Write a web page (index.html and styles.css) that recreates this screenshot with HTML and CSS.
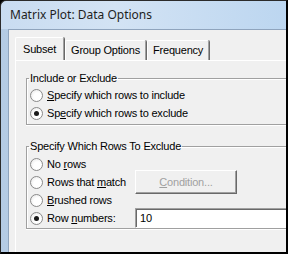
FILE: index.html
```html
<!DOCTYPE html>
<html lang="en">
<head>
  <meta charset="UTF-8" />
  <title>Matrix Plot: Data Options</title>
  <link rel="stylesheet" href="styles.css">
</head>
<body>
  <div class="window">
    <div class="titlebar">Matrix Plot: Data Options</div>

    <div class="frame">
      <div class="client">
        <!-- TABS -->
        <div class="tabs">
          <div class="tab active">Subset</div>
          <div class="tab">Group Options</div>
          <div class="tab">Frequency</div>
        </div>

        <div class="panel">
          <fieldset class="group group-include">
            <legend>Include or Exclude</legend>
            <label class="radio"><span class="dot"></span><span><u>S</u>pecify which rows to include</span></label>
            <label class="radio"><span class="dot checked"></span><span>Sp<u>e</u>cify which rows to exclude</span></label>
          </fieldset>

          <fieldset class="group group-rows">
            <legend>Specify Which Rows To Exclude</legend>
            <label class="radio"><span class="dot"></span><span>No <u>r</u>ows</span></label>
            <div class="row">
              <label class="radio"><span class="dot"></span><span>Rows that <u>m</u>atch</span></label>
              <button class="btn" disabled><u>C</u>ondition...</button>
            </div>
            <label class="radio"><span class="dot"></span><span><u>B</u>rushed rows</span></label>
            <div class="row">
              <label class="radio"><span class="dot checked"></span><span>Row <u>n</u>umbers:</span></label>
              <input class="field" type="text" value="10" />
            </div>
          </fieldset>
        </div>
      </div>
    </div>
  </div>
</body>
</html>
```

FILE: styles.css
```css
body {
  margin: 0;
  width: 288px;
  height: 254px;
  overflow: hidden;
  background: #000;
  font-family: "Liberation Sans", Arial, sans-serif;
  font-size: 11px;
  letter-spacing: -0.2px;
  color: #000;
}

.window {
  box-sizing: border-box;
  width: 288px;
  height: 254px;
  border-top: 1px solid #2b2b2b;
  border-left: 1px solid #2b2b2b;
  border-right: 2px solid #000;
  border-bottom: 2px solid #000;
  border-top-left-radius: 6px;
  background: linear-gradient(90deg, #c9dcf1 0%, #d3e3f4 40%, #bcd6f0 100%);
  display: flex;
  flex-direction: column;
  overflow: hidden;
}

.titlebar {
  height: 28px;
  line-height: 28px;
  padding-left: 9px;
  font-family: "Noto Sans", sans-serif;
  font-size: 12px;
  letter-spacing: 0;
  color: #1e1e1e;
  flex: none;
}

.frame {
  flex: 1;
  display: flex;
  padding-left: 7px;
  background: linear-gradient(90deg, #b4cbe4, #c8dbef);
}

.client {
  flex: 1;
  background: #f0f0f0;
  border-top: 1px solid #8fa4bd;
  border-left: 1px solid #8fa4bd;
  padding: 7px 0 0 6px;
}

/* вкладки */
.tabs {
  display: flex;
  align-items: flex-end;
  height: 23px;
}

.tab {
  height: 19px;
  line-height: 19px;
  padding: 0 5px;
  border-top: 1px solid #fff;
  border-left: 1px solid #fff;
  border-right: 1px solid #a0a0a0;
  box-shadow: 1px 0 0 #696969;
  margin-right: 1px;
  border-radius: 2px 2px 0 0;
}

.tab.active {
  height: 22px;
  line-height: 22px;
  padding: 0 7px;
}

.panel {
  border-top: 1px solid #fff;
  border-left: 1px solid #fff;
  padding: 10px 0 0 10px;
  height: 190px;
}

.group {
  margin: 0;
  padding: 0 0 0 3px;
  border: 1px solid #a0a0a0;
  border-right: none;
  box-shadow: inset 1px 1px 0 #fff, 0 1px 0 #fff;
}

.group legend {
  padding: 0 1px;
  margin-left: -1px;
  line-height: 14px;
}

.group-include {
  height: 51px;
  padding-top: 1px;
}

.group-rows {
  margin-top: 14px;
  padding-top: 2px;
  height: 86px;
}

.radio {
  display: flex;
  align-items: center;
  gap: 4px;
  height: 18px;
  white-space: nowrap;
}

.dot {
  box-sizing: border-box;
  flex: none;
  width: 13px;
  height: 13px;
  border-radius: 50%;
  border: 1px solid #8a8a8a;
  background: radial-gradient(circle at 60% 60%, #fff 40%, #e2e2e2 100%);
  display: flex;
  align-items: center;
  justify-content: center;
}

.dot.checked::after {
  content: "";
  width: 5px;
  height: 5px;
  border-radius: 50%;
  background: #1a1a1a;
}

.row {
  display: flex;
  align-items: center;
  height: 18px;
}

.row .radio {
  width: 105px;
  flex: none;
}

.btn {
  flex: none;
  width: 102px;
  height: 24px;
  font: inherit;
  letter-spacing: inherit;
  color: #a0a0a0;
  background: #f0f0f0;
  border: 1px solid #fff;
  border-right-color: #696969;
  border-bottom-color: #696969;
  box-shadow: inset -1px -1px 0 #a0a0a0;
  padding: 0;
}

.field {
  box-sizing: border-box;
  flex: none;
  width: 160px;
  height: 20px;
  font: inherit;
  letter-spacing: inherit;
  padding: 0 4px;
  border: 1px solid #a0a0a0;
  border-right: none;
  border-bottom-color: #fff;
  box-shadow: inset 1px 1px 0 #696969;
  background: #fff;
}
```
